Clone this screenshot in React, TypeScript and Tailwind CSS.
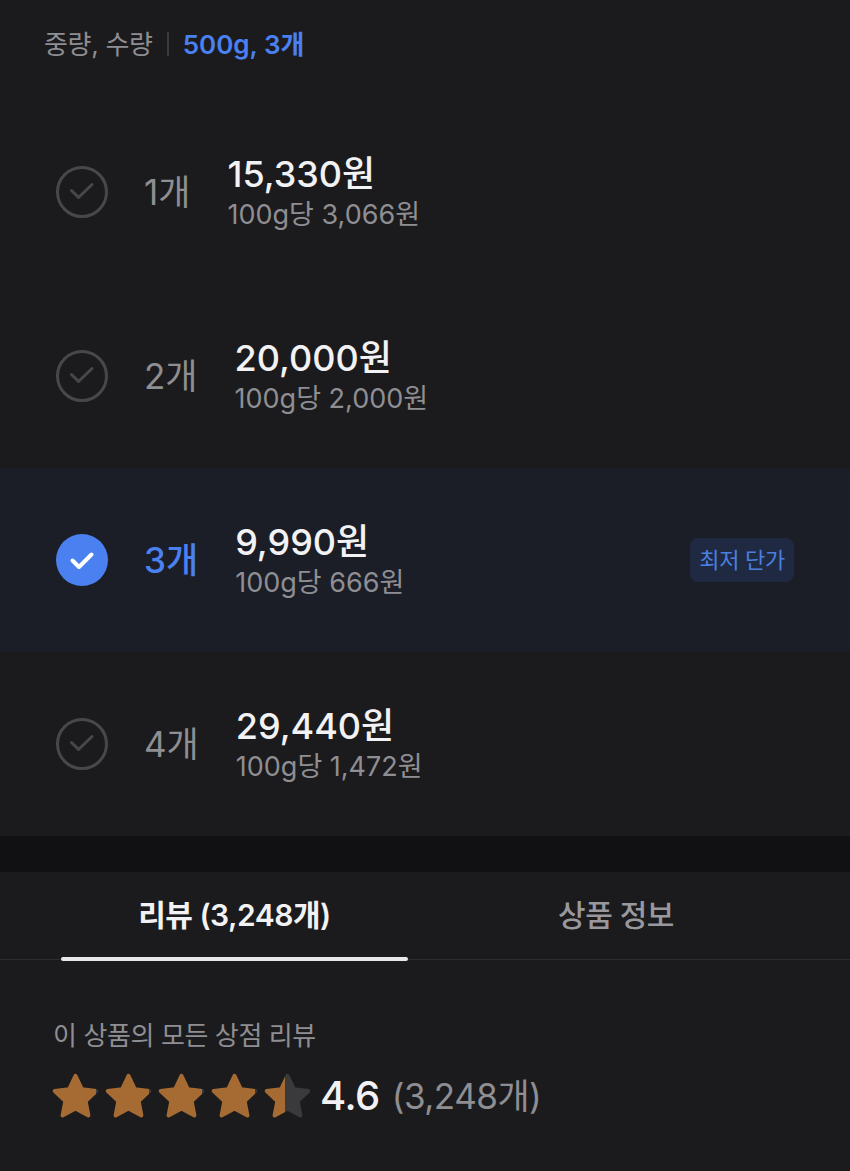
import React from "react";

const font = { fontFamily: '"Inter", "Noto Sans CJK KR", sans-serif' };

function CheckCircle({ selected }: { selected: boolean }) {
  if (selected) {
    return (
      <svg width="52" height="52" viewBox="0 0 52 52">
        <circle cx="26" cy="26" r="26" fill="#4a80f0" />
        <path d="M16.5 26.5l6.5 6.5 12.5-12.5" fill="none" stroke="#ffffff" strokeWidth="4" strokeLinecap="round" strokeLinejoin="round" />
      </svg>
    );
  }
  return (
    <svg width="52" height="52" viewBox="0 0 52 52">
      <circle cx="26" cy="26" r="24.5" fill="none" stroke="#48484b" strokeWidth="3" />
      <path d="M15.5 24.5l7 7 13.5-13" fill="none" stroke="#48484b" strokeWidth="3" strokeLinecap="round" strokeLinejoin="round" />
    </svg>
  );
}

const STAR = "M12 2.6l2.85 6.05 6.55.85-4.8 4.55 1.25 6.55L12 17.4l-5.85 3.2 1.25-6.55-4.8-4.55 6.55-.85z";

function Star({ fill, id }: { fill: number; id: string }) {
  return (
    <svg width="53" height="53" viewBox="0 0 24 24">
      <defs>
        <linearGradient id={id} x1="0" x2="1" y1="0" y2="0">
          <stop offset={`${fill * 100}%`} stopColor="#a66a33" />
          <stop offset={`${fill * 100}%`} stopColor="#3a3a3d" />
        </linearGradient>
      </defs>
      <path d={STAR} fill={`url(#${id})`} stroke={`url(#${id})`} strokeWidth="1.8" strokeLinejoin="round" />
    </svg>
  );
}

const rows = [
  { q: "1개", price: "15,330원", unit: "100g당 3,066원", selected: false },
  { q: "2개", price: "20,000원", unit: "100g당 2,000원", selected: false },
  { q: "3개", price: "9,990원", unit: "100g당 666원", selected: true },
  { q: "4개", price: "29,440원", unit: "100g당 1,472원", selected: false },
];

export default function App() {
  return (
    <div className="w-[850px] h-[1171px] bg-[#1b1b1d] overflow-hidden" style={font}>
      <div className="h-[100px] pl-[44px] pt-[26px] flex items-start">
        <div className="flex items-center h-[36px] text-[26px]">
          <span className="text-[#8e8e93] tracking-[-0.3px]">중량, 수량</span>
          <span className="mx-[14px] w-[2px] h-[24px] bg-[#3a3a3d]" />
          <span className="text-[#4a80f0] font-semibold">500g, 3개</span>
        </div>
      </div>

      {rows.map((r) => (
        <div
          key={r.q}
          className={`h-[184px] flex items-center pl-[56px] pr-[56px] ${r.selected ? "bg-[#1b1e26]" : ""}`}
        >
          <CheckCircle selected={r.selected} />
          <span
            className={`ml-[36px] text-[35px] ${r.selected ? "text-[#4a80f0] font-medium" : "text-[#8e8e93]"}`}
          >
            {r.q}
          </span>
          <div className="ml-[37px] flex flex-col">
            <span className="text-[36px] leading-[42px] font-medium text-[#f2f2f4]">{r.price}</span>
            <span className="mt-[4px] text-[27px] leading-[32px] text-[#8e8e93]">{r.unit}</span>
          </div>
          {r.selected && (
            <div className="ml-auto h-[44px] px-[9px] rounded-[8px] bg-[#1f2a42] flex items-center text-[22px] text-[#4a7fe0] tracking-[-0.3px]">
              최저 단가
            </div>
          )}
        </div>
      ))}

      <div className="h-[36px] bg-[#111113]" />

      <div className="h-[88px] flex border-b-[1.5px] border-[#2e2e31]">
        <div className="ml-[61px] w-[347px] relative flex items-center justify-center">
          <span className="text-[30px] font-semibold text-[#f2f2f4] tracking-[-0.5px]">리뷰 (3,248개)</span>
          <div className="absolute bottom-[-2px] left-0 right-0 h-[4px] rounded-full bg-[#e8e8ea]" />
        </div>
        <div className="w-[416px] flex items-center justify-center">
          <span className="text-[30px] font-medium text-[#98989d] tracking-[-0.5px]">상품 정보</span>
        </div>
      </div>

      <div className="pl-[53px] pt-[60px]">
        <div className="text-[26px] leading-[32px] text-[#8e8e93] tracking-[-0.4px]">이 상품의 모든 상점 리뷰</div>
        <div className="mt-[14px] flex items-center">
          <div className="flex gap-0 ml-[-4px]">
            <Star fill={1} id="s1" />
            <Star fill={1} id="s2" />
            <Star fill={1} id="s3" />
            <Star fill={1} id="s4" />
            <Star fill={0.44} id="s5" />
          </div>
          <span className="ml-[6px] text-[40px] font-medium text-[#f2f2f4] tracking-[-0.5px]">4.6</span>
          <span className="ml-[12px] text-[35px] text-[#8e8e93] tracking-[-0.5px]">(3,248개)</span>
        </div>
      </div>
    </div>
  );
}
